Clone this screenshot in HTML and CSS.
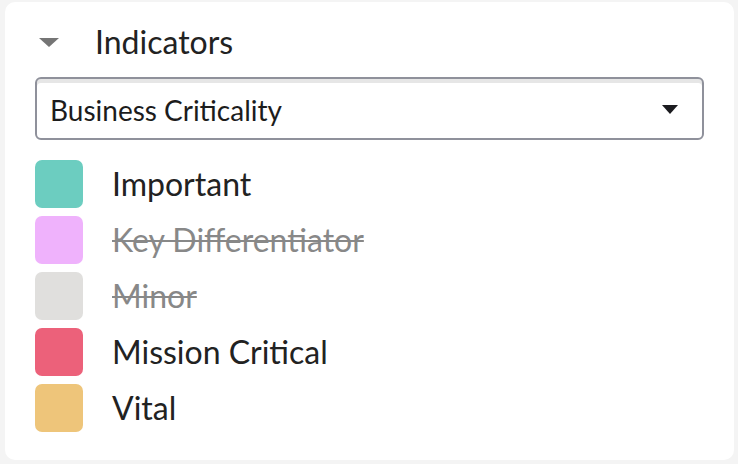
FILE: index.html
```html
<!DOCTYPE html>
<html>
<head>
<meta charset="utf-8">
<link rel="stylesheet" href="styles.css">
</head>
<body>
<div class="card">
  <div class="heading">
    <svg class="caret" width="20" height="10" viewBox="0 0 20 10"><path d="M0 0 H20 L10 9 Z" fill="#757575"/></svg>
    <span class="title">Indicators</span>
  </div>
  <div class="select">
    <span class="select-text">Business Criticality</span>
    <svg class="select-arrow" width="16" height="10" viewBox="0 0 16 10"><path d="M0 0 H16 L8 9 Z" fill="#1b1b1f"/></svg>
  </div>
  <ul class="legend">
    <li class="item"><span class="swatch teal"></span><span class="label">Important</span></li>
    <li class="item off"><span class="swatch pink"></span><span class="label">Key Differentiator</span></li>
    <li class="item off"><span class="swatch grey"></span><span class="label">Minor</span></li>
    <li class="item"><span class="swatch red"></span><span class="label">Mission Critical</span></li>
    <li class="item"><span class="swatch yellow"></span><span class="label">Vital</span></li>
  </ul>
</div>
</body>
</html>
```
FILE: styles.css
```css
html, body {
  margin: 0;
  padding: 0;
  background: #f4f4f4;
  font-family: "Lato", "Noto Sans", sans-serif;
}
body {
  padding: 2px 4px 4px 5px;
  width: 738px;
  height: 464px;
  box-sizing: border-box;
}
.card {
  background: #fff;
  border-radius: 10px;
  height: 458px;
  padding: 20px 30px 0 30px;
  box-sizing: border-box;
}
.heading {
  display: flex;
  align-items: center;
  height: 40px;
}
.caret {
  margin-left: 4px;
  margin-top: 2px;
  flex: none;
}
.title {
  margin-left: 36px;
  font-size: 32px;
  line-height: 40px;
  color: #222;
}
.select {
  margin-top: 15px;
  height: 63px;
  box-sizing: border-box;
  border: 2px solid #8f919b;
  border-radius: 6px;
  box-shadow: inset 0 4px 0 #e6e6e6;
  display: flex;
  align-items: center;
  padding: 3px 24px 0 13px;
}
.select-text {
  flex: 1;
  font-size: 28px;
  line-height: 34px;
  color: #1c1c1c;
}
.select-arrow {
  flex: none;
}
.legend {
  list-style: none;
  margin: 20px 0 0 0;
  padding: 0;
  display: flex;
  flex-direction: column;
  gap: 8px;
}
.item {
  display: flex;
  align-items: center;
  height: 48px;
}
.swatch {
  width: 48px;
  height: 48px;
  border-radius: 7px;
  flex: none;
}
.label {
  margin-left: 29px;
  font-size: 32px;
  line-height: 40px;
  color: #222;
}
.off .label {
  color: #888;
  text-decoration: line-through;
  text-decoration-thickness: 2px;
}
.teal { background: #6ccdc0; }
.pink { background: #efb2fc; }
.grey { background: #e0dfdd; }
.red { background: #ec617a; }
.yellow { background: #eec57a; }
```
